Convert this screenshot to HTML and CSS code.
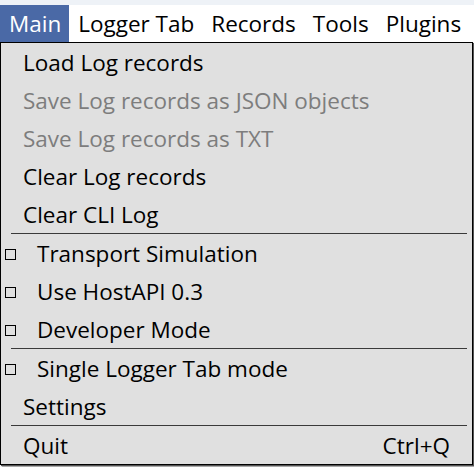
FILE: index.html
```html
<!DOCTYPE html>
<html>
<head>
<meta charset="utf-8">
<link rel="stylesheet" href="styles.css">
</head>
<body>
<div class="topstrip"></div>
<div class="menubar">
  <span class="mb-item active">Main</span>
  <span class="mb-item">Logger Tab</span>
  <span class="mb-item">Records</span>
  <span class="mb-item">Tools</span>
  <span class="mb-item">Plugins</span>
</div>
<div class="dropdown">
  <div class="item">Load Log records</div>
  <div class="item disabled">Save Log records as JSON objects</div>
  <div class="item disabled">Save Log records as TXT</div>
  <div class="item">Clear Log records</div>
  <div class="item">Clear CLI Log</div>
  <div class="sep"></div>
  <div class="item check"><span class="box"></span>Transport Simulation</div>
  <div class="item check"><span class="box"></span>Use HostAPI 0.3</div>
  <div class="item check"><span class="box"></span>Developer Mode</div>
  <div class="sep"></div>
  <div class="item check"><span class="box"></span>Single Logger Tab mode</div>
  <div class="item">Settings</div>
  <div class="sep"></div>
  <div class="item"><span class="label">Quit</span><span class="accel">Ctrl+Q</span></div>
</div>
</body>
</html>
```
FILE: styles.css
```css
html, body {
  margin: 0;
  padding: 0;
  background: #f0f0f0;
  width: 474px;
  height: 467px;
  overflow: hidden;
  font-family: "Open Sans", "Noto Sans", sans-serif;
  font-size: 22.5px;
  color: #000;
}
.topstrip {
  height: 5px;
  background: #eef2f7;
}
.menubar {
  height: 37px;
  background: #fff;
  display: flex;
  align-items: stretch;
}
.mb-item {
  display: flex;
  align-items: center;
  padding: 0 8px 0 9px;
}
.mb-item.active {
  background: #4a69a6;
  color: #fff;
}
.dropdown {
  width: 471px;
  border: 1px solid #000;
  background: #e0e0e0;
  box-shadow: 1px 1px 0 #555, 2px 2px 1px #aaa;
  display: flex;
  flex-direction: column;
}
.item {
  height: 38px;
  display: flex;
  align-items: center;
  padding-left: 22px;
  padding-right: 22px;
  white-space: nowrap;
}
.item.disabled {
  color: #7d7d7d;
}
.item.check {
  padding-left: 4px;
}
.box {
  width: 9px;
  height: 9px;
  border: 1px solid #000;
  margin-right: 21px;
  margin-top: 2px;
}
.label {
  flex: 1;
}
.sep {
  height: 1px;
  background: #3a3a3a;
  margin: 0 5px 0 10px;
}
```
